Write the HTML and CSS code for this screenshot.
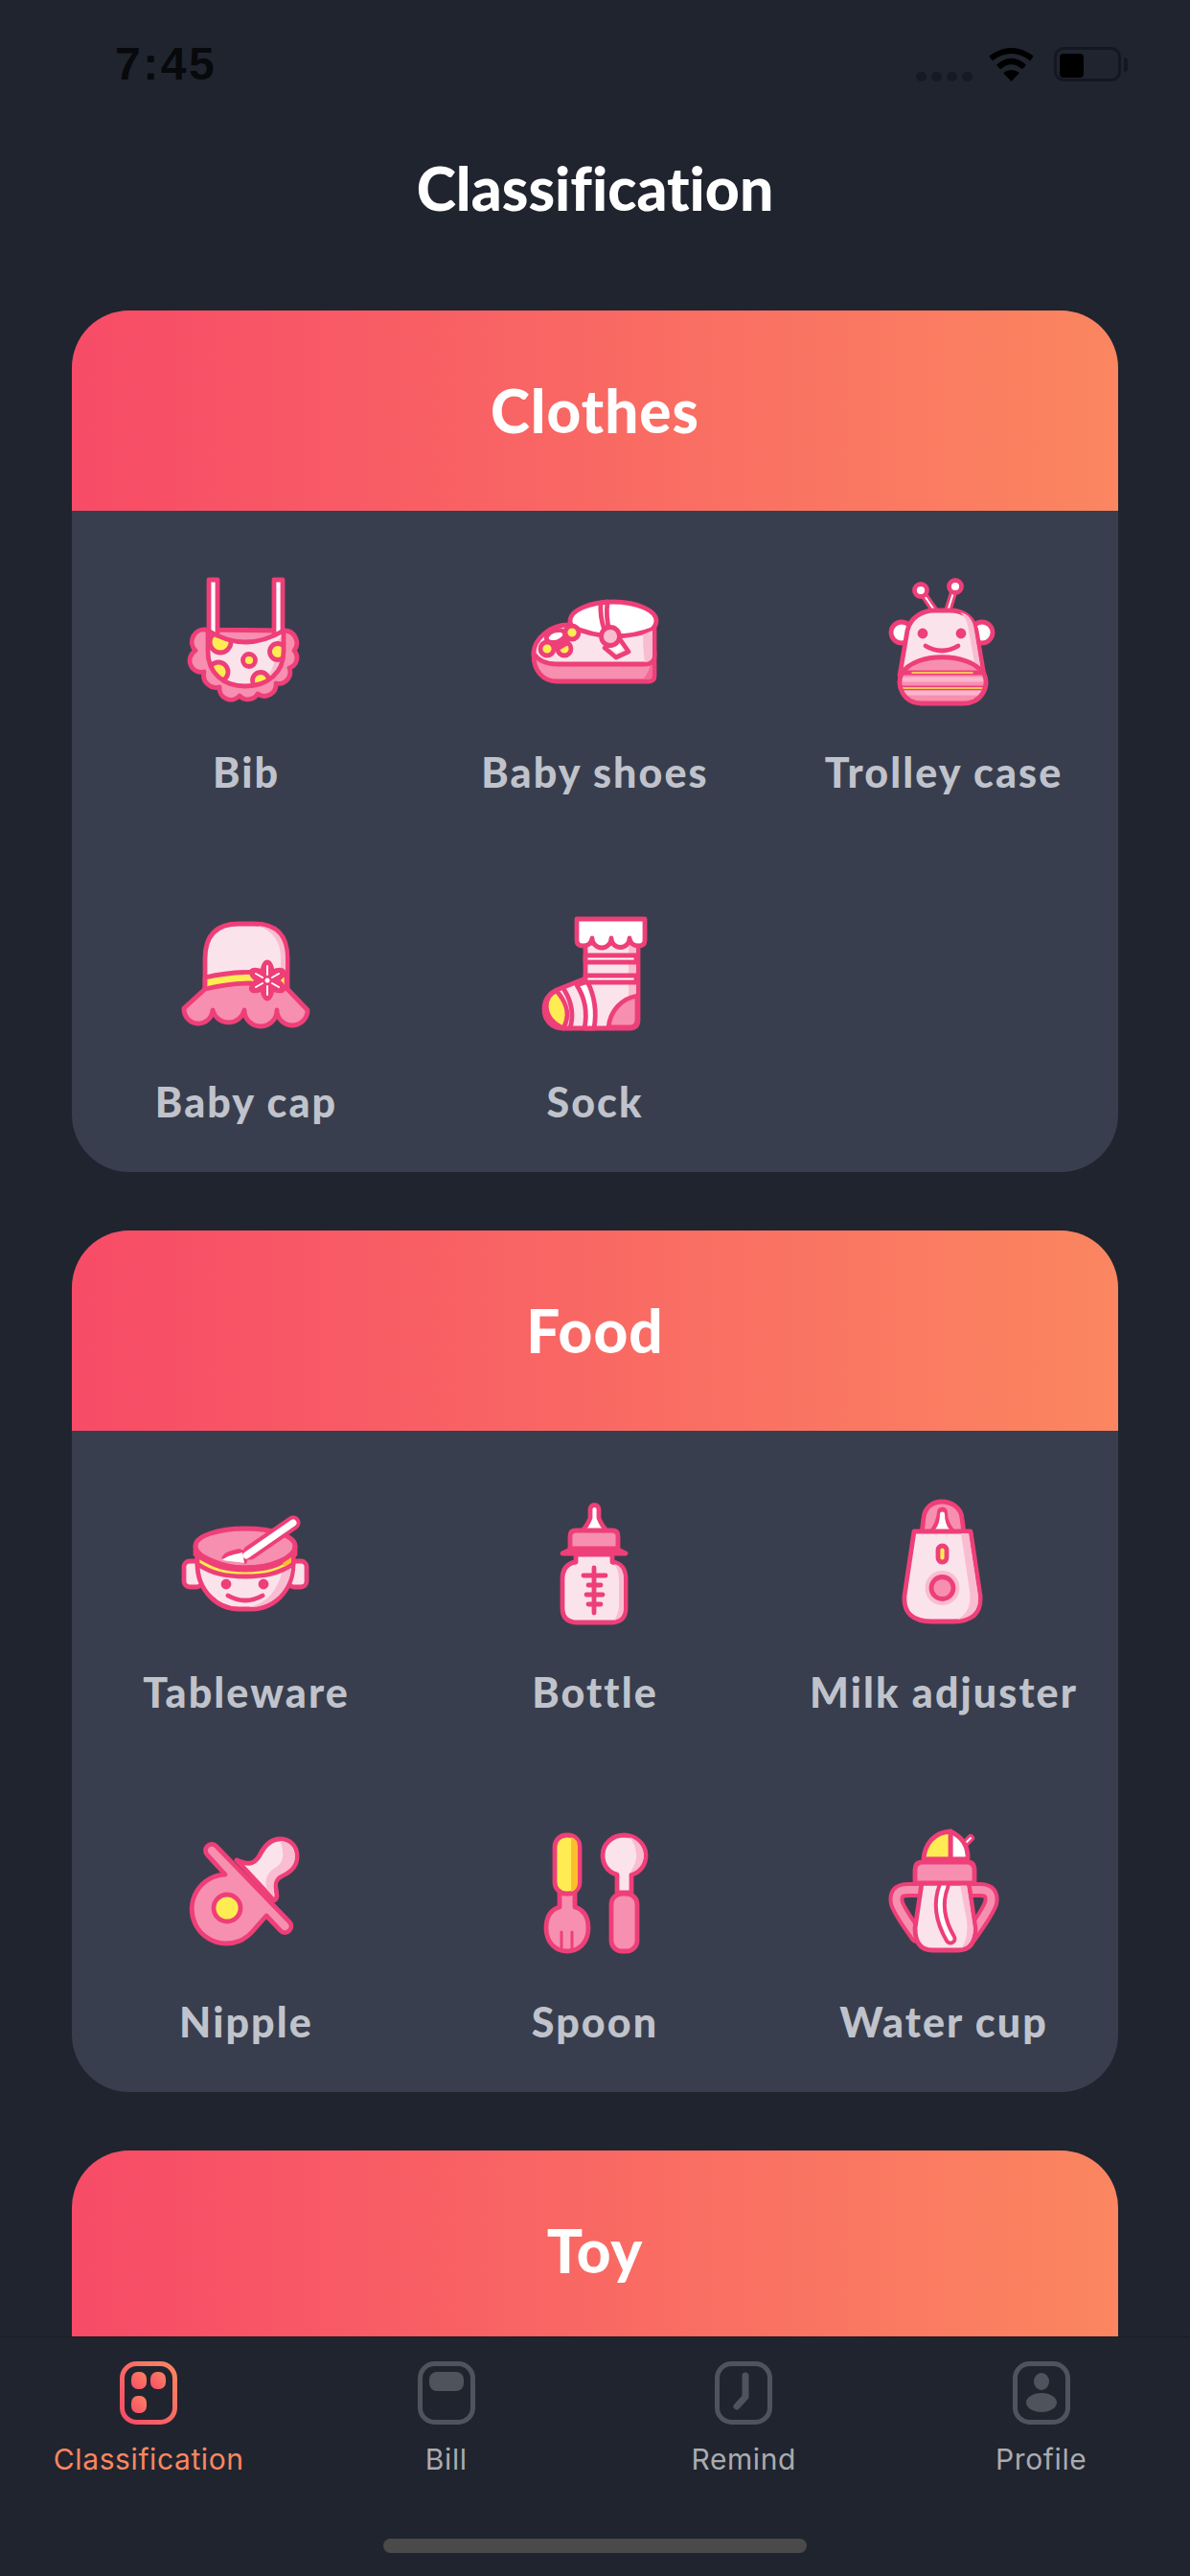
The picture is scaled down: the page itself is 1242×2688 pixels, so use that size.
FILE: index.html
```html
<!DOCTYPE html>
<html lang="en">
<head>
<meta charset="utf-8">
<title>Classification</title>
<link rel="stylesheet" href="styles.css">
</head>
<body>
<div class="screen">
  <div class="status">
    <span class="time">7:45</span>
    <div class="status-right">
      <div class="signal"><i></i><i></i><i></i><i></i></div>
      <svg class="wifi" viewBox="0 0 49 35"><path class="wf" d="M3 11Q24.500-5 46 11M11 20Q24.500 8 38 20"/><path class="wb" d="M16 26Q24.500 20 33 26L24.500 35Z"/></svg>
      <div class="battery"><div class="level"></div></div>
      <div class="nub"></div>
    </div>
  </div>
  <h1 class="title">Classification</h1>
  <div class="content">
    <section class="card">
      <h2 class="card-head">Clothes</h2>
      <div class="grid">
        <div class="item">
          <svg class="icon" viewBox="0 0 140 140">
            <defs><clipPath id="bibclip"><path d="M30 58Q69 82 109 58V80C109 102 92 116 69 116C46 116 30 102 30 80Z"/></clipPath></defs>
            <g class="ic">
            <path class="m" d="M28 57A13 13 0 0 0 17 79A12 12 0 0 0 26 101A13 13 0 0 0 42 117A12 12 0 0 0 63 126A12 12 0 0 0 82 124A12 12 0 0 0 101 113A12 12 0 0 0 115 97A11 11 0 0 0 120 79A13 13 0 0 0 110 58Z"/>
            <path class="w" d="M31 5H40V70H31ZM99 5H108V70H99Z"/>
            <path class="l nos" d="M30 58Q69 82 109 58V80C109 102 92 116 69 116C46 116 30 102 30 80Z"/>
            <path class="d nos" d="M100 71L107 64V80C107 92 100 104 88 111C97 100 103 90 100 71Z"/>
            <g clip-path="url(#bibclip)">
              <circle class="y" cx="43" cy="70" r="11"/>
              <circle class="y" cx="103" cy="80" r="8.500"/>
              <circle class="y" cx="41" cy="101" r="10"/>
              <circle class="y" cx="85" cy="110" r="8.500"/>
            </g>
            <circle class="y" cx="73" cy="89" r="6.500"/>
            <path class="n" d="M30 58Q69 82 109 58V80C109 102 92 116 69 116C46 116 30 102 30 80Z"/>
          </g></svg>
          <span class="label">Bib</span>
        </div>
        <div class="item">
          <svg class="icon" viewBox="0 0 140 140"><g class="ic">
            <ellipse class="w" cx="89" cy="48" rx="45" ry="20"/>
            <path class="m" d="M6 84C6 100 16 111 30 111H126Q132 111 132 105V80H6Z"/>
            <path class="p2 nos" d="M128 93Q130 93 130 90V105Q130 109 126 109H120Q126 102 128 93Z"/>
            <path class="l" d="M6 82C6 66 24 52 42 52C58 60 90 72 132 56V84Q132 93 122 93H30C18 93 10 88 6 82Z"/>
            <path class="d nos" d="M120 62L130 58V84Q130 90 122 91Q120 80 120 62Z"/>
            <path class="w" d="M76 29Q75 44 80 58L85 58Q81 44 83 28Z"/>
            <path class="l" d="M80 76L92 86L105 80L96 67Z"/>
            <path class="w nos" d="M87 76L93 81L99 77L95 72Z"/>
            <circle class="d" cx="86" cy="64" r="9.500"/>
            <circle class="y" cx="46" cy="60" r="7"/>
            <circle class="y" cx="20" cy="77" r="7"/>
            <circle class="y" cx="38" cy="77" r="7"/>
            <path class="p nos" d="M24 68L42 62L44 72L30 80Z"/>
            <ellipse class="w" cx="29" cy="64" rx="10" ry="6" transform="rotate(-18 29 64)"/>
          </g></svg>
          <span class="label">Baby shoes</span>
        </div>
        <div class="item">
          <svg class="icon" viewBox="0 0 140 140">
            <defs><clipPath id="bagclip"><path d="M26 103C40 80 96 80 112 103C118 116 110 134 90 134H47C28 134 20 116 26 103Z"/></clipPath></defs>
            <g class="ic">
            <path class="bar8" d="M46 16L61 38M82 12L74 38"/>
            <path class="bar2" d="M46 16L61 38M82 12L74 38"/>
            <circle class="w" cx="46" cy="16" r="6.500"/>
            <circle class="w" cx="82" cy="12" r="6.500"/>
            <circle class="w" cx="26" cy="60" r="11"/>
            <circle class="w" cx="110" cy="60" r="11"/>
            <path class="l" d="M24 105L32 58C35 44 48 37 60 37H77C90 37 101 44 104 58L112 105Z"/>
            <path class="d nos" d="M87 39C95 40 101 47 102 58L109 100L102 92L96 58C95 49 92 43 87 39Z"/>
            <path class="m nos" d="M26 103C40 80 96 80 112 103C118 116 110 134 90 134H47C28 134 20 116 26 103Z"/>
            <g clip-path="url(#bagclip)">
              <path class="lb" d="M20 109H118"/>
              <path class="bar5" d="M20 102H118M20 118H118"/>
              <path class="bary" d="M37 102H100M27 118H110"/>
              <path class="lb" d="M20 123H118"/>
            </g>
            <path class="n" d="M26 103C40 80 96 80 112 103C118 116 110 134 90 134H47C28 134 20 116 26 103Z"/>
            <circle class="p" cx="48" cy="61" r="3"/>
            <circle class="p" cx="88" cy="61" r="3"/>
            <path class="n" d="M51 74Q68 84 85 74"/>
          </g></svg>
          <span class="label">Trolley case</span>
        </div>
        <div class="item">
          <svg class="icon" viewBox="0 0 140 140"><g class="ic">
            <path class="l" d="M27 90V56Q27 20 62 20H78Q113 20 113 56V90Z"/>
            <path class="d nos" d="M82 22Q111 24 111 56V74H106V56Q106 30 82 22Z"/>
            <path class="y" d="M27 76Q70 66 112 74V88Q70 80 27 89Z"/>
            <path class="m" d="M27 88C60 80 85 80 113 88L134 110A16 16 0 0 1 102 110A17 17 0 0 1 68 110A17 17 0 0 1 35 110A15 15 0 0 1 5 108Z"/>
            <ellipse class="p" cx="92" cy="79" rx="6" ry="19"/>
            <ellipse class="p" cx="92" cy="79" rx="6" ry="19" transform="rotate(60 92 79)"/>
            <ellipse class="p" cx="92" cy="79" rx="6" ry="19" transform="rotate(120 92 79)"/>
            <path class="bar2" d="M92 64V73M92 85V94M80 72L87 76M97 82L104 86M80 86L87 82M97 76L104 72"/>
            <circle class="wn" cx="92" cy="79" r="2.500"/>
          </g></svg>
          <span class="label">Baby cap</span>
        </div>
        <div class="item">
          <svg class="icon" viewBox="0 0 140 140"><g class="ic">
            <path class="l" d="M60 40H115V120Q115 129 106 129H37C24 129 17 120 17 109C17 100 22 93 30 89L60 77Z"/>
            <path class="d nos" d="M105 42H113V94L105 96Z"/>
            <path class="m" d="M84 128C86 110 98 98 114 95V120Q114 128 106 128Z"/>
            <path class="y" d="M30 90C16 94 13 118 37 129C44 116 42 104 30 90Z"/>
            <path class="w" d="M51 84C60 98 62 114 59 129H69C72 112 70 96 62 80Z"/>
            <path class="n" d="M38 89C46 102 48 115 44 129"/>
            <path class="w" d="M60 53H113V60H60Z"/>
            <path class="w" d="M60 74H113V81H60Z"/>
            <path class="w" d="M51 15H122V37Q122 43 116 43Q107 43 106 35A9.500 9.500 0 0 1 87 35A10 10 0 0 1 67 35Q66 43 57 43Q51 43 51 37Z"/>
          </g></svg>
          <span class="label">Sock</span>
        </div>
      </div>
    </section>
    <section class="card">
      <h2 class="card-head">Food</h2>
      <div class="grid">
        <div class="item">
          <svg class="icon" viewBox="0 0 140 140"><g class="ic">
            <rect class="l" x="5" y="69" width="19" height="27" rx="6"/>
            <rect class="l" x="114" y="69" width="19" height="27" rx="6"/>
            <path class="l" d="M19 62V72C19 100 40 119 62 119H76C98 119 119 100 119 72V62Z"/>
            <path class="d nos" d="M108 78L117 74V78C114 100 98 116 76 117H72Q100 112 108 78Z"/>
            <path class="m" d="M17 53C17 43 40 35 69 35C98 35 121 43 121 53V62C108 72 90 76 69 76C48 76 30 72 17 62Z"/>
            <path class="y" d="M19 63C36 74 48 78 69 78C90 78 104 74 119 63V72C104 82 90 85 69 85C48 85 34 82 19 72Z"/>
            <path class="or nos" d="M108 71L117 65V70L110 75Z"/>
            <path class="n" d="M17 53C17 65 48 76 69 76C96 76 121 65 121 53"/>
            <path class="p nos" d="M44 66C48 58 56 58 62 56L74 60L70 72Z"/>
            <path class="bar14" d="M119 29L74 60"/>
            <path class="bar7" d="M119 29L70 63"/>
            <path class="w nos" d="M45 68C50 63 58 62 66 60L68 71Z"/>
            <circle class="p" cx="49" cy="93" r="3"/>
            <circle class="p" cx="88" cy="93" r="3"/>
            <path class="n" d="M51 105Q69 115 87 105"/>
          </g></svg>
          <span class="label">Tableware</span>
        </div>
        <div class="item">
          <svg class="icon" viewBox="0 0 140 140"><g class="ic">
            <path class="w" d="M56 38Q62 32 65 24V15A4.500 4.500 0 0 1 74 15V24Q77 32 83 38Z"/>
            <path class="l" d="M50 62H88V70Q102 72 102 88V118Q102 133 86 133H52Q36 133 36 118V88Q36 72 50 70Z"/>
            <path class="d nos" d="M90 72Q100 74 100 88V118Q100 129 90 131Q96 122 95 110V88Q95 78 90 72Z"/>
            <path class="m" d="M44 57V43Q44 37 50 37H88Q94 37 94 43V57Z"/>
            <path class="y" d="M36 61L46 56H92L102 61Z"/>
            <path class="n" d="M69 76V123M58 84H81M63 94H76M61 104H78M63 114H76"/>
          </g></svg>
          <span class="label">Bottle</span>
        </div>
        <div class="item">
          <svg class="icon" viewBox="0 0 140 140"><g class="ic">
            <path class="m" d="M47 40L49 24C50 13 58 7 68 7C78 7 88 13 89 24L91 40Z"/>
            <path class="p nos" d="M56 36Q62 28 63 18A5.500 5.500 0 0 1 74 18Q74 28 81 36Z"/>
            <path class="wn" d="M61 36Q66 30 66 20A2.500 2.500 0 0 1 71 20Q71 30 76 36Z"/>
            <path class="l" d="M39 38H98L108 105Q110 132 80 132H58Q27 132 29 105Z"/>
            <path class="d nos" d="M88 40H96L106 105Q108 127 84 130Q100 122 97 100Z"/>
            <rect class="y" x="64" y="53" width="9" height="17" rx="4.500"/>
            <circle class="dn" cx="68.500" cy="97" r="18"/>
            <circle class="m" cx="68.500" cy="97" r="11.500"/>
          </g></svg>
          <span class="label">Milk adjuster</span>
        </div>
        <div class="item">
          <svg class="icon" viewBox="0 0 140 140"><g class="ic">
            <path class="l" d="M60 37C72 42 78 42 84 32C90 20 98 15 105 15C116 15 123 22 123 33C123 44 115 50 108 53C100 57 100 62 101 67C102 73 103 77 99 79Z"/>
            <path class="d nos" d="M105 17C115 17 121 24 121 33C121 43 114 48 106 52C98 56 98 62 99 76L92 68C88 58 92 50 100 45C110 40 110 28 105 17Z"/>
            <path class="m" d="M38.600 22.400L115 101.400A6.500 6.500 0 0 1 105.800 110.600L91 95L76 112A36 36 0 1 1 48 52L29.400 31.600A6.500 6.500 0 0 1 38.600 22.400Z"/>
            <circle class="y" cx="50" cy="87" r="14"/>
          </g></svg>
          <span class="label">Nipple</span>
        </div>
        <div class="item">
          <svg class="icon" viewBox="0 0 140 140"><g class="ic">
            <path class="m" d="M33 70H49V86C56 88 63 94 63 108C63 122 54 132 41 132C28 132 19 122 19 108C19 94 26 88 33 86Z"/>
            <path class="n thin" d="M35 112V129M46 112V129"/>
            <rect class="y" x="28" y="11" width="26" height="61" rx="12"/>
            <path class="or nos" d="M45 13Q52 15 52 23V60Q52 68 45 70Z"/>
            <path class="l" d="M93 52C84 50 78 42 78 32C78 20 88 11 100 11C112 11 123 20 123 32C123 42 117 50 108 52V71H93Z"/>
            <path class="d nos" d="M105 13C115 15 121 24 121 32C121 42 114 48 106 51C110 45 114 38 113 30C112 22 110 17 105 13Z"/>
            <rect class="m" x="87" y="72" width="27" height="60" rx="11"/>
          </g></svg>
          <span class="label">Spoon</span>
        </div>
        <div class="item">
          <svg class="icon" viewBox="0 0 140 140"><g class="ic">
            <path class="bar16" d="M44 68H32Q18 68 21 82Q24 91 42 116M96 68H108Q122 68 119 82Q116 91 98 116"/>
            <path class="barm" d="M44 68H32Q18 68 21 82Q24 91 42 116M96 68H108Q122 68 119 82Q116 91 98 116"/>
            <path class="bar8" d="M91 21L98 14"/>
            <path class="bar2" d="M91 21L98 14"/>
            <path class="w" d="M77 7V36H95Q96 16 77 7Z"/>
            <path class="y" d="M77 7C60 8 50 20 49 36H77Z"/>
            <path class="l" d="M47 61H96L103 108Q103 131 85 131H58Q40 131 40 108Z"/>
            <path class="d nos" d="M87 63H94L101 108Q101 124 88 129Q96 120 94 100Z"/>
            <path class="bar12" d="M70 64Q60 90 77 119"/>
            <path class="bar5w" d="M70 64Q60 90 77 119"/>
            <path class="m" d="M40 61V47Q40 39 48 39H94Q102 39 102 47V61Z"/>
          </g></svg>
          <span class="label">Water cup</span>
        </div>
      </div>
    </section>
    <section class="card">
      <h2 class="card-head">Toy</h2>
      <div class="grid-empty"></div>
    </section>
  </div>
  <nav class="tabbar">
    <div class="tab active">
      <svg class="tab-icon" viewBox="0 0 60 66">
        <defs><linearGradient id="tg" x1="1" y1="0" x2="0" y2="1"><stop offset="0" stop-color="#fb8660"/><stop offset="1" stop-color="#f74b67"/></linearGradient></defs>
        <rect class="tab-frame act" x="2.500" y="2.500" width="55" height="61" rx="15"/>
        <rect class="act-fill" x="12" y="11" width="16" height="18" rx="7"/>
        <rect class="act-fill" x="32" y="11" width="16" height="18" rx="7"/>
        <rect class="act-fill" x="12" y="36" width="16" height="18" rx="7"/>
      </svg>
      <span class="tab-label">Classification</span>
    </div>
    <div class="tab">
      <svg class="tab-icon" viewBox="0 0 60 66">
        <rect class="tab-frame" x="2.500" y="2.500" width="55" height="61" rx="15"/>
        <rect class="tab-fill" x="12" y="11" width="36" height="20" rx="8"/>
      </svg>
      <span class="tab-label">Bill</span>
    </div>
    <div class="tab">
      <svg class="tab-icon" viewBox="0 0 60 66">
        <rect class="tab-frame" x="2.500" y="2.500" width="55" height="61" rx="15"/>
        <path class="tab-hand" d="M32 15V37L23 47"/>
      </svg>
      <span class="tab-label">Remind</span>
    </div>
    <div class="tab">
      <svg class="tab-icon" viewBox="0 0 60 66">
        <rect class="tab-frame" x="2.500" y="2.500" width="55" height="61" rx="15"/>
        <ellipse class="tab-fill" cx="30" cy="21" rx="8" ry="9"/>
        <ellipse class="tab-fill" cx="30" cy="43" rx="16" ry="10"/>
      </svg>
      <span class="tab-label">Profile</span>
    </div>
    <div class="home"></div>
  </nav>
</div>
</body>
</html>
```
FILE: styles.css
```css
* { box-sizing: border-box; }
html, body { margin: 0; padding: 0; background: #20242f; }
.screen { width: 1242px; height: 2688px; display: flex; flex-direction: column; overflow: hidden; background: #20242f; }

.status { height: 100px; flex: none; display: flex; justify-content: space-between; padding: 44px 65px 0 120px; }
.time { font: 700 48px/46px "Liberation Sans", sans-serif; color: #08090c; letter-spacing: 2.5px; }
.status-right { display: flex; align-items: flex-start; }
.signal { display: flex; gap: 5px; margin-top: 31px; }
.signal i { width: 11px; height: 10px; border-radius: 5px; background: #171a23; }
.wifi { width: 49px; height: 35px; margin: 6px 20px 0 16px; }
.wf { fill: none; stroke: #000; stroke-width: 6px; }
.wb { fill: #000; }
.battery { width: 70px; height: 36px; margin-top: 5px; border: 3px solid #14171f; border-radius: 10px; padding: 4px 3px; }
.level { width: 25px; height: 25px; border-radius: 4px; background: #000; }
.nub { width: 4px; height: 15px; margin: 16px 0 0 3px; border-radius: 0 4px 4px 0; background: #14171f; }

.title { flex: none; height: 192px; margin: 0; text-align: center; font: 900 62.500px/192px Lato, sans-serif; font-variant-ligatures: none; color: #fff; }
.content { flex: 1; min-height: 0; overflow: hidden; padding: 32px 75px 0; display: flex; flex-direction: column; gap: 61px; }

.card { flex: none; background: #383e4e; border-radius: 60px; overflow: hidden; }
.card-head { height: 209px; margin: 0; text-align: center; font: 900 62px/209px Lato, sans-serif; letter-spacing: 1px; font-variant-ligatures: none; color: #fff; background: linear-gradient(90deg, #f74b67 0%, #fb8660 100%); }
.grid { display: grid; grid-template-columns: repeat(3, 364px); row-gap: 114px; padding: 67px 0 49px; }
.grid-empty { height: 480px; }
.item { display: flex; flex-direction: column; align-items: center; }
.icon { width: 140px; height: 140px; display: block; }
.label { margin-top: 42px; font: 900 43px/48px Lato, sans-serif; letter-spacing: 2.1px; color: #c0c3cb; white-space: nowrap; }

.ic { stroke: #ee3f78; stroke-width: 4.8px; stroke-linejoin: round; stroke-linecap: round; fill: none; }
.m { fill: #f78fb0; }
.l { fill: #fbe3ec; }
.d { fill: #f9bdd1; }
.y { fill: #ffec52; }
.w { fill: #fff; }
.p { fill: #ee3f78; }
.p2 { fill: #f26a97; }
.or { fill: #fbbf2e; }
.n { fill: none; }
.nos { stroke: none; }
.wn { fill: #fff; stroke: none; }
.dn { fill: #f9bdd1; stroke: none; }
.thin { stroke-width: 3px; }
.lb { stroke: #fbb5cc; stroke-width: 5px; stroke-linecap: butt; }
.bar2 { stroke: #fff; stroke-width: 2px; }
.bar5 { stroke: #ee3f78; stroke-width: 5px; stroke-linecap: butt; }
.bary { stroke: #ffec52; stroke-width: 1.5px; }
.bar7 { stroke: #fff; stroke-width: 7px; }
.bar8 { stroke: #ee3f78; stroke-width: 8px; }
.bar12 { stroke: #ee3f78; stroke-width: 13px; }
.bar14 { stroke: #ee3f78; stroke-width: 15px; }
.bar16 { stroke: #ee3f78; stroke-width: 16px; }
.barm { stroke: #f78fb0; stroke-width: 8px; }
.bar5w { stroke: #fff; stroke-width: 5px; }

.tabbar { flex: none; height: 250px; display: grid; grid-template-columns: repeat(4, 1fr); align-content: start; padding-top: 25px; border-top: 1px solid #191c24; background: #20242f; position: relative; }
.tab { display: flex; flex-direction: column; align-items: center; }
.tab-icon { width: 60px; height: 66px; display: block; }
.tab-frame { fill: none; stroke: #50535c; stroke-width: 5px; }
.tab-frame.act { stroke: url(#tg); }
.act-fill { fill: url(#tg); }
.tab-fill { fill: #50535c; }
.tab-hand { fill: none; stroke: #50535c; stroke-width: 7px; stroke-linecap: round; stroke-linejoin: round; }
.tab-label { margin-top: 18px; font: 400 30px/36px Inter, sans-serif; letter-spacing: 0.6px; color: #a9abaf; white-space: nowrap; }
.tab.active .tab-label { color: #fb8660; }
.home { position: absolute; left: 400px; top: 210px; width: 442px; height: 15px; border-radius: 8px; background: #4a4a4a; }
```
